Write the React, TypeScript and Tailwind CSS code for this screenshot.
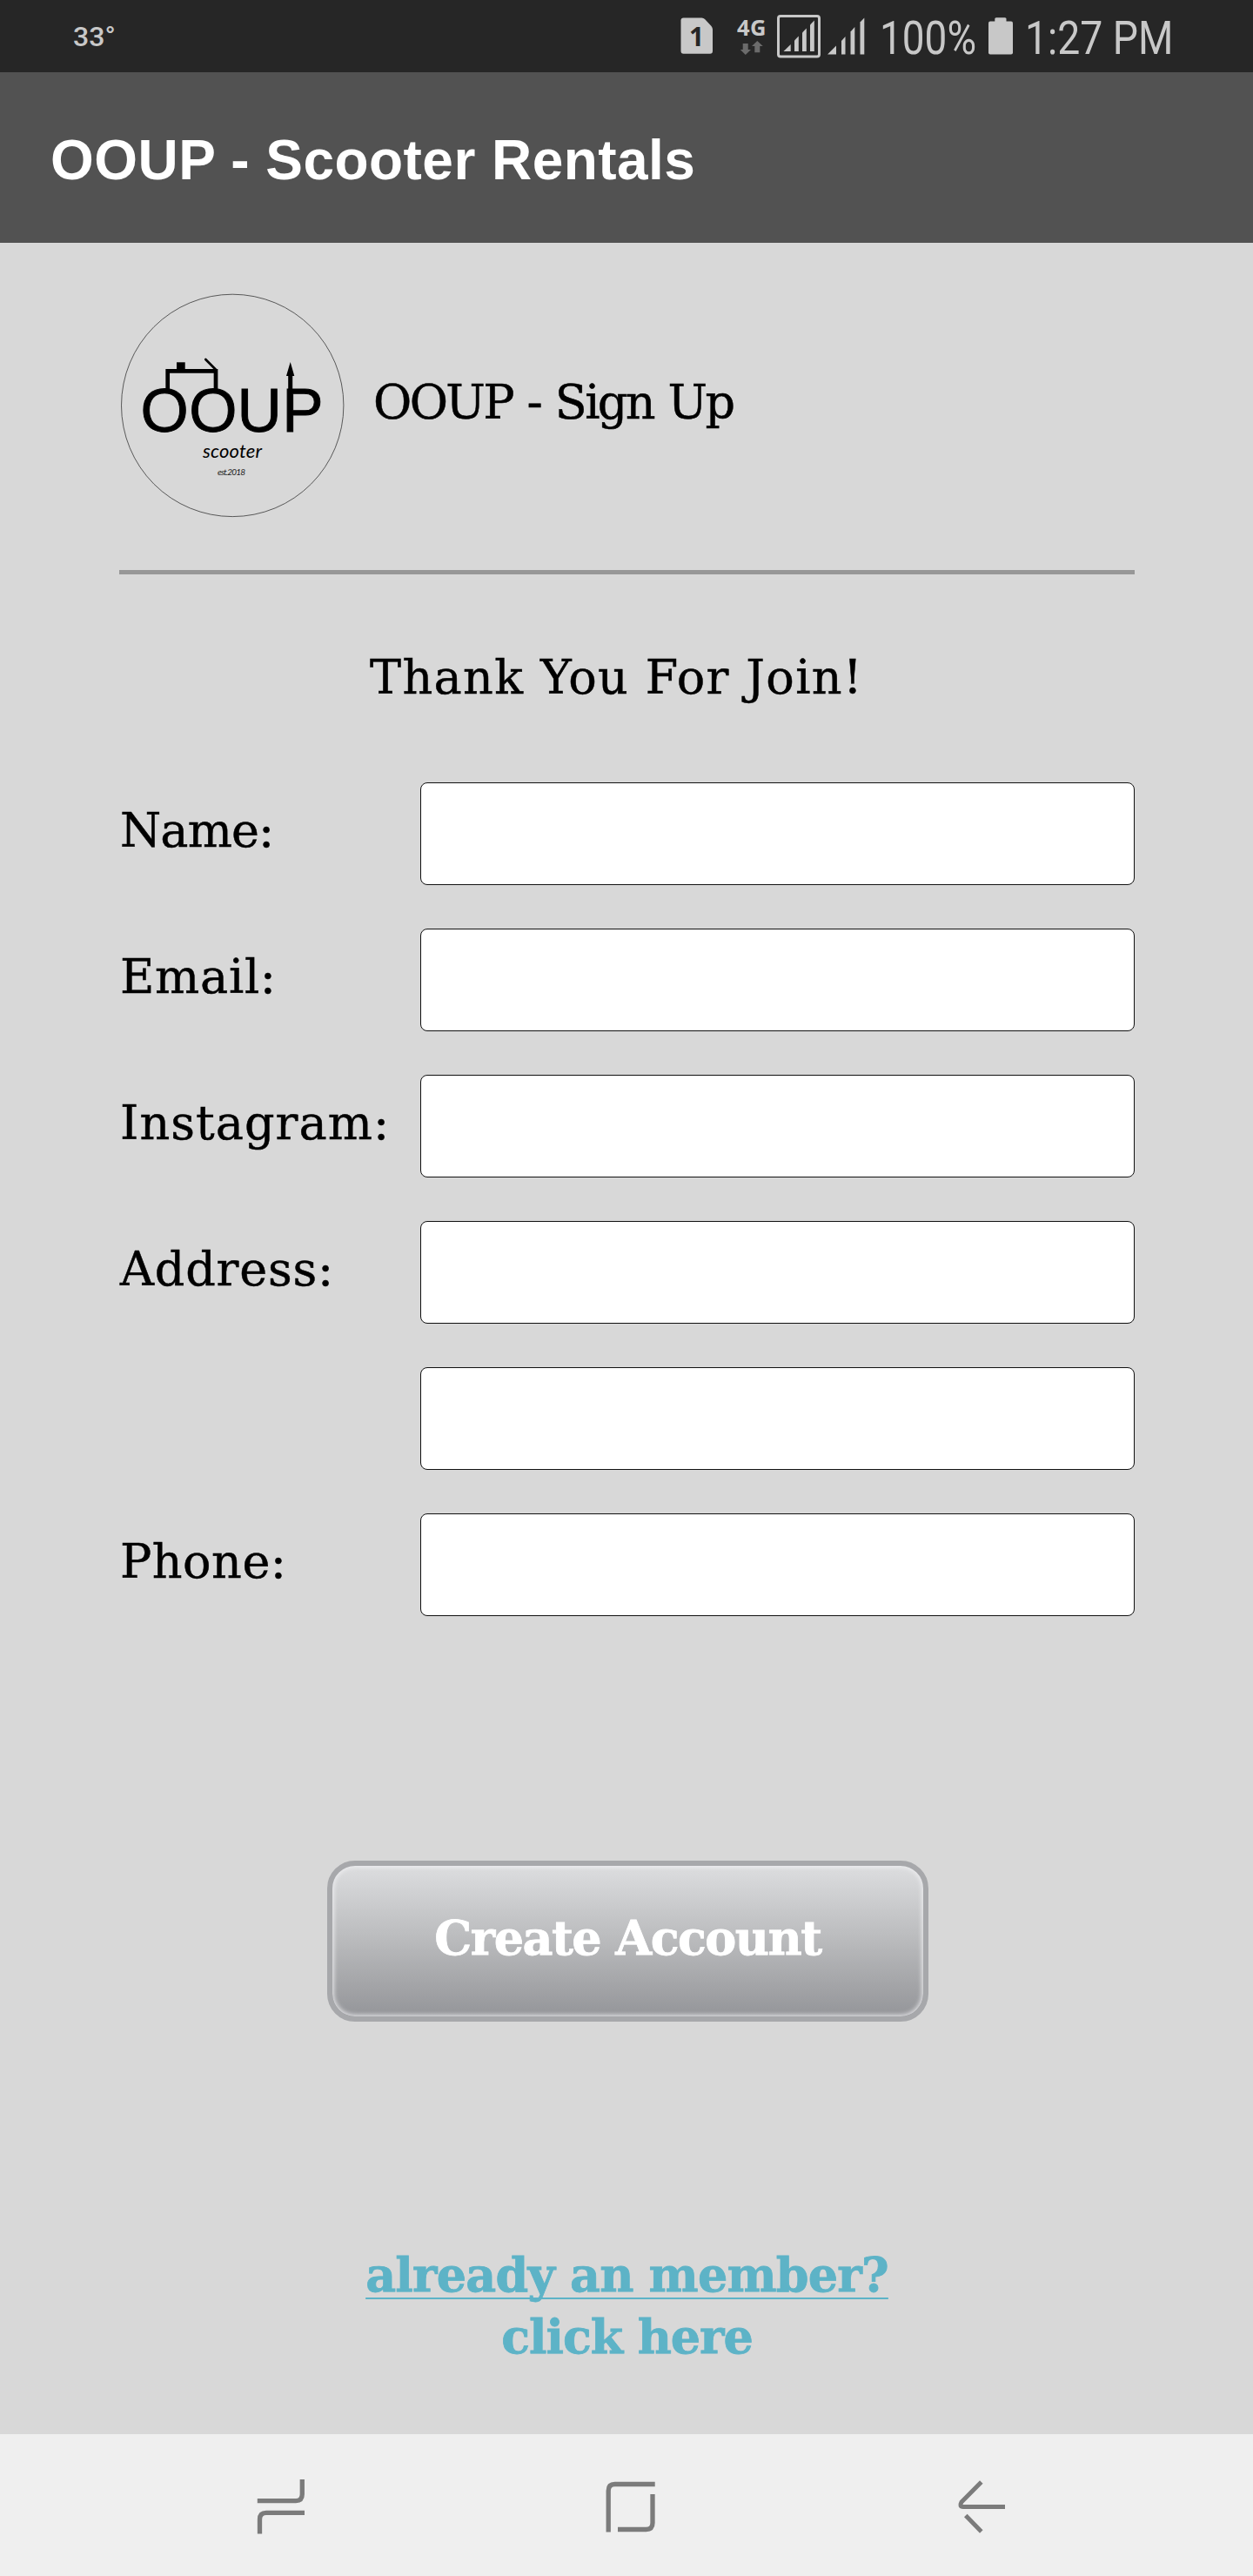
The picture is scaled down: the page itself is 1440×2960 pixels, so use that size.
const fields = [
  { id: "name", label: "Name:", tracking: "tracking-[-0.9px]" },
  { id: "email", label: "Email:", tracking: "tracking-[0.7px]" },
  { id: "instagram", label: "Instagram:", tracking: "tracking-[1.05px]" },
  { id: "address", label: "Address:", tracking: "tracking-[0.8px]" },
  { id: "address2", label: "", tracking: "" },
  { id: "phone", label: "Phone:", tracking: "tracking-[0.5px]" },
];

function SimIcon() {
  return (
    <svg className="h-[83px] w-[38px] shrink-0" viewBox="782 0 38 83" fill="#c8c8c8">
      <path d="M785.5 20.5H806.5Q808.5 20.5 810 22L817.5 30Q819 32 819 34V58.5Q819 61.7 816 61.7H785.5Q782.5 61.7 782.5 58.5V23.5Q782.5 20.5 785.5 20.5Z" />
      <text x="792" y="53.3" fontFamily="Open Sans" fontWeight="700" fontSize="30" fill="#262626">1</text>
    </svg>
  );
}

function NetworkIcon() {
  return (
    <svg className="ml-[27px] h-[83px] w-[34px] shrink-0" viewBox="847 0 34 83">
      <text x="847" y="41.3" fontFamily="Open Sans" fontWeight="700" fontSize="25.5" textLength="33.5" fill="#c8c8c8">4G</text>
      <path d="M853.7 50H859.7V57H863L856.8 63L850.8 57H853.7Z" fill="#6b6b6b" />
      <path d="M867.3 60.3V53H864L870.3 47L876.8 53H873.3V60.3Z" fill="#6b6b6b" />
    </svg>
  );
}

function SignalIcons() {
  return (
    <svg className="ml-[12px] h-[83px] w-[101px] shrink-0" viewBox="893 0 101 83" fill="#c8c8c8">
      <rect x="894.5" y="18.5" width="47" height="46.5" rx="2.5" fill="none" stroke="#c8c8c8" strokeWidth="3" />
      <path d="M900.5 59H908.7V51Z" />
      <path d="M913 59V46.5L917.8 41.5V59Z" />
      <path d="M922 59V37.5L926.8 32.5V59Z" />
      <path d="M931 59V28.5L935.8 23.5V59Z" />
      <path d="M951 62.5H961V52.5Z" />
      <path d="M967 62.5V47L971.5 42V62.5Z" />
      <path d="M977.5 62.5V36.5L982.3 31V62.5Z" />
      <path d="M988.5 62.5V25.5L993.3 20.5V62.5Z" />
    </svg>
  );
}

function BatteryIcon() {
  return (
    <svg className="ml-[14px] h-[83px] w-[28px] shrink-0" viewBox="1136 0 28 83" fill="#c8c8c8">
      <rect x="1136" y="24.5" width="28" height="38" rx="2" />
      <rect x="1143.3" y="20.3" width="13.2" height="8" rx="1.5" />
    </svg>
  );
}

function Logo() {
  return (
    <svg className="h-[258px] w-[258px] shrink-0" viewBox="138 337 258 258">
      <circle cx="267.2" cy="465.9" r="127.7" fill="none" stroke="#4a4a4a" strokeWidth="0.9" />
      <text x="161.6 217.2 272.5 324.3" y="495.7" fontFamily="Liberation Sans" fontSize="71" stroke="#000" strokeWidth="0.9">OOUP</text>
      <path d="M192.7 447V426.3H248V447" fill="none" stroke="#000" strokeWidth="4.7" />
      <rect x="203" y="416.3" width="9.7" height="9" />
      <path d="M236.3 413L248 424.7" stroke="#000" strokeWidth="2.7" strokeLinecap="round" />
      <path d="M333.7 416L338.3 432H336.2V450H331.2V432H329Z" />
      <text x="233" y="526" fontFamily="Lato" fontStyle="italic" fontSize="22" textLength="68">scooter</text>
      <text x="250" y="546" fontFamily="Lato" fontStyle="italic" fontSize="10" textLength="32" fill="#222">est.2018</text>
    </svg>
  );
}

function StatusBar() {
  return (
    <div className="flex h-[83px] items-center overflow-hidden bg-[#262626] pl-[84px] font-[Roboto] text-[#c8c8c8]">
      <span className="w-[698px] text-[32px] font-medium leading-[84px]">33°</span>
      <SimIcon />
      <NetworkIcon />
      <SignalIcons />
      <span className="ml-[16.5px] w-[111px] shrink-0 text-[54px] leading-[87px]">
        <span className="relative top-[2px] block origin-left scale-x-[0.85] whitespace-nowrap">100%</span>
      </span>
      <BatteryIcon />
      <span className="ml-[14.5px] w-[170px] shrink-0 text-[54px] leading-[87px]">
        <span className="relative top-[2px] block origin-left scale-x-[0.857] whitespace-nowrap">1:27 PM</span>
      </span>
    </div>
  );
}

function NavBar() {
  return (
    <nav className="flex h-[163px] items-center bg-[#efefef] pl-[294px]">
      <svg className="h-[68px] w-[58px]" viewBox="294 2845 58 68" fill="none" stroke="#7b7b7b" strokeWidth="5.3">
        <path d="M347.3 2849V2866Q347.3 2873.6 340 2873.6H295.8" />
        <path d="M350 2887.4H306Q298.5 2887.4 298.5 2895V2911.5" />
      </svg>
      <svg className="ml-[342px] h-[68px] w-[62px]" viewBox="694 2845 62 68" fill="none" stroke="#7b7b7b" strokeWidth="5.3">
        <path d="M752.7 2854.5H706.5Q699.2 2854.5 699.2 2862V2909.5" />
        <path d="M750 2866V2899Q750 2906.5 742.5 2906.5H710" />
      </svg>
      <svg className="ml-[342px] h-[68px] w-[60px]" viewBox="1098 2845 60 68" fill="none" stroke="#7b7b7b" strokeWidth="5">
        <path d="M1127.8 2852L1105 2875Q1102 2880.5 1107 2880.5H1155" />
        <path d="M1109.8 2890.5L1127.8 2909" />
      </svg>
    </nav>
  );
}

export default function App() {
  return (
    <div className="flex h-[2960px] w-[1440px] flex-col overflow-hidden bg-[#d8d8d8] text-black">
      <StatusBar />
      <header className="h-[196px] overflow-hidden bg-[#525252] pl-[58px]">
        <h1 className="font-['Liberation_Sans',sans-serif] text-[64px] font-bold leading-[202px] tracking-[0.45px] text-white">
          OOUP - Scooter Rentals
        </h1>
      </header>

      <main className="flex flex-1 flex-col pl-[137px] pr-[136px] pt-[58px] font-['DejaVu_Serif',serif] text-[54px] leading-[64px]">
        <div className="flex items-center pl-px">
          <Logo />
          <h2 className="mb-[7px] ml-[33px] tracking-[-2.6px] [word-spacing:2px] [-webkit-text-stroke:0.5px_black]">OOUP - Sign Up</h2>
        </div>

        <hr className="mt-[60px] h-[5px] border-0 bg-[#979797]" />

        <p className="ml-[288px] mt-[87px] tracking-[1.37px] [-webkit-text-stroke:0.5px_black]">Thank You For Join!</p>

        <form className="mt-[88px] flex flex-col gap-[50px]">
          {fields.map((f) => (
            <div key={f.id} className="flex h-[118px] items-center pl-px">
              <label
                htmlFor={f.id}
                className={`mb-[6px] w-[345px] whitespace-nowrap [-webkit-text-stroke:0.5px_black] ${f.tracking}`}
              >
                {f.label}
              </label>
              <input
                id={f.id}
                className="h-[118px] w-[822px] rounded-[8px] border border-[#111] bg-white px-6 outline-none"
              />
            </div>
          ))}
        </form>

        <button
          type="button"
          className="ml-[239px] mt-[281px] flex h-[185px] w-[691px] items-center justify-center rounded-[32px] border-[6px] border-[#a7a8ab] bg-linear-to-b from-[#dfe0e2] via-[#b9babc] to-[#929397] bg-origin-border pb-[8px] font-bold tracking-[-1.55px] text-white shadow-[inset_0_0_5px_2px_rgba(240,240,242,0.8)] [-webkit-text-stroke:0.8px_white]"
        >
          Create Account
        </button>

        <a href="#" className="mt-[256px] text-center font-bold leading-[71px] text-[#5db3c7] [-webkit-text-stroke:0.8px_#5db3c7]">
          <span className="block tracking-[-0.8px] underline decoration-[2px] underline-offset-[7px] [text-decoration-skip-ink:none]">
            already an member?
          </span>
          <span className="block tracking-[-1.1px]">click here</span>
        </a>
      </main>

      <NavBar />
    </div>
  );
}
